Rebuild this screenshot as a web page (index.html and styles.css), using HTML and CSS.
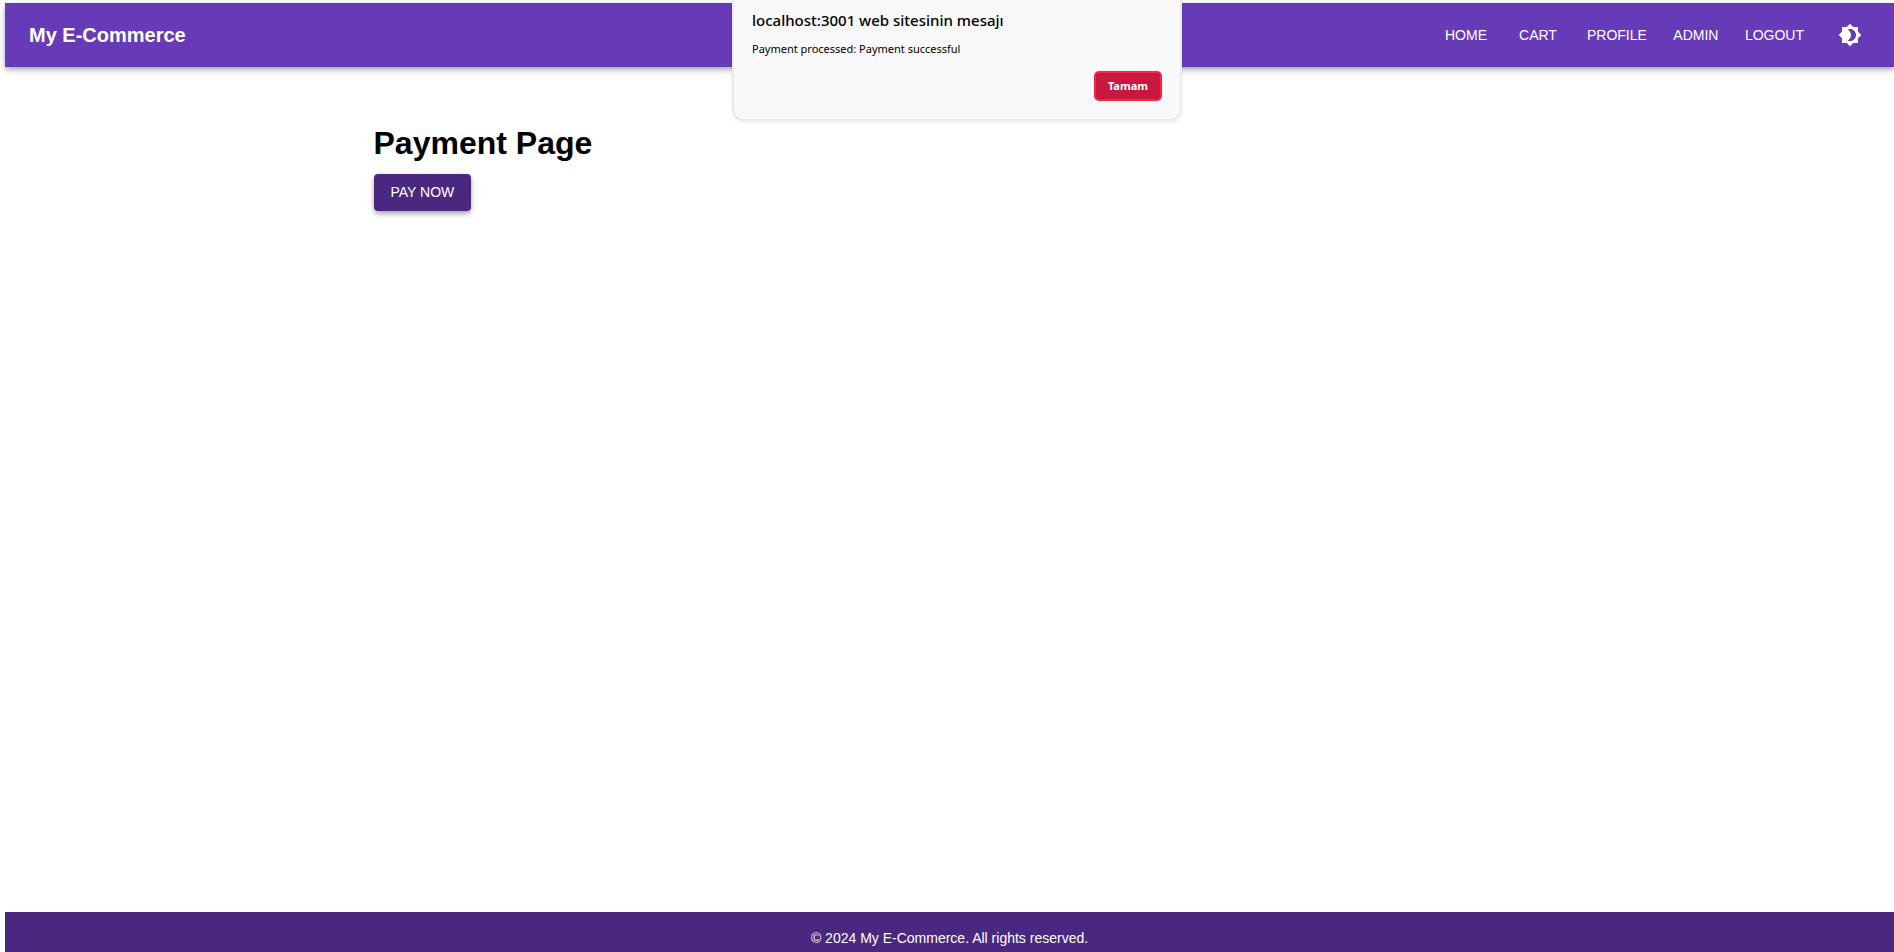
FILE: index.html
```html
<!DOCTYPE html>
<html lang="en">
<head>
<meta charset="utf-8">
<title>My E-Commerce</title>
<link rel="stylesheet" href="styles.css">
</head>
<body>
<div class="page">
  <header class="app-bar">
    <div class="brand">My E-Commerce</div>
    <nav class="nav">
      <a class="nav-link" href="#home">HOME</a>
      <a class="nav-link" href="#cart">CART</a>
      <a class="nav-link" href="#profile">PROFILE</a>
      <a class="nav-link" href="#admin">ADMIN</a>
      <a class="nav-link" href="#logout">LOGOUT</a>
    </nav>
    <button class="theme-toggle" type="button" aria-label="Toggle theme">
      <svg viewBox="0 0 24 24" width="24" height="24" fill="currentColor" aria-hidden="true"><path d="M20 8.690V4h-4.690L12 .69 8.690 4H4v4.690L.69 12 4 15.310V20h4.690L12 23.310 15.310 20H20v-4.690L23.310 12 20 8.690zM12 18c-.89 0-1.740-.2-2.500-.55C11.560 16.500 13 14.420 13 12s-1.440-4.500-3.500-5.450C10.260 6.200 11.110 6 12 6c3.310 0 6 2.690 6 6s-2.690 6-6 6z"/></svg>
    </button>
  </header>
  <main class="content">
    <h1 class="heading">Payment Page</h1>
    <button class="pay" type="button">PAY NOW</button>
  </main>
  <footer class="footer">© 2024 My E-Commerce. All rights reserved.</footer>
</div>
<div class="overlay">
  <div class="dialog" role="alertdialog" aria-labelledby="dialog-title" aria-describedby="dialog-text">
    <h2 class="dialog-title" id="dialog-title">localhost:3001 web sitesinin mesajı</h2>
    <p class="dialog-text" id="dialog-text">Payment processed: Payment successful</p>
    <button class="dialog-ok" type="button">Tamam</button>
  </div>
</div>
</body>
</html>
```
FILE: styles.css
```css
* { box-sizing: border-box; }
body {
  margin: 0;
  background: #fff;
  color: #000;
  font-family: "Liberation Sans", Arial, sans-serif;
  font-size: 14px;
}
.page {
  display: flex;
  flex-direction: column;
  min-height: 100vh;
  padding: 3px 0 0 5px;
  overflow: hidden;
}
.app-bar {
  display: flex;
  align-items: center;
  height: 64px;
  padding: 0 20px 0 24px;
  background: #673ab7;
  color: #fff;
  box-shadow: 0 2px 4px -1px rgba(0,0,0,.2), 0 4px 5px 0 rgba(0,0,0,.14), 0 1px 10px 0 rgba(0,0,0,.12);
}
.brand {
  flex: 1;
  font-size: 20px;
  font-weight: 700;
  line-height: 32px;
}
.nav {
  display: flex;
  gap: 8px;
  margin-right: 13px;
}
.nav-link {
  min-width: 64px;
  padding: 6px 9px;
  color: inherit;
  line-height: 24px;
  text-align: center;
  text-decoration: none;
}
.theme-toggle {
  display: flex;
  padding: 12px;
  border: 0;
  background: none;
  color: inherit;
}
.content {
  flex: 1;
  width: 100%;
  max-width: 1200px;
  margin: 0 auto;
  padding: 56px 24px 24px;
}
.heading {
  margin: 0 0 11px;
  font-size: 32px;
  font-weight: 700;
  line-height: 40px;
}
.pay {
  display: block;
  padding: 6px 17px;
  border: 0;
  border-radius: 4px;
  background: #4a287f;
  color: #fff;
  font: 14px/25px "Liberation Sans", Arial, sans-serif;
  box-shadow: 0 2px 4px -1px rgba(0,0,0,.2), 0 4px 5px 0 rgba(0,0,0,.14), 0 1px 10px 0 rgba(0,0,0,.12);
}
.footer {
  padding: 16px 16px 4px;
  background: #4a287f;
  color: #fff;
  line-height: 20px;
  text-align: center;
}
.overlay {
  position: absolute;
  top: 0;
  left: 20px;
  right: 0;
  display: flex;
  justify-content: center;
}
.dialog {
  display: flex;
  flex-direction: column;
  width: 450px;
  padding: 8px 18px 18px;
  border: 2px solid #ebebed;
  border-top: 0;
  border-radius: 0 0 12px 12px;
  background: #f9f9fb;
  box-shadow: 0 2px 4px rgba(0,0,0,.06);
  font-family: "Noto Sans", sans-serif;
}
.dialog-title {
  margin: 0 0 8px;
  font-size: 15px;
  font-weight: 500;
  line-height: 24px;
}
.dialog-text {
  margin: 0 0 13px;
  font-size: 11px;
  line-height: 18px;
}
.dialog-ok {
  align-self: flex-end;
  padding: 4px 12px;
  border: 2px solid #ff1f50;
  border-radius: 5px;
  background: #c9183e;
  color: #fff;
  font: 700 11px/18px "Noto Sans", sans-serif;
}
```
